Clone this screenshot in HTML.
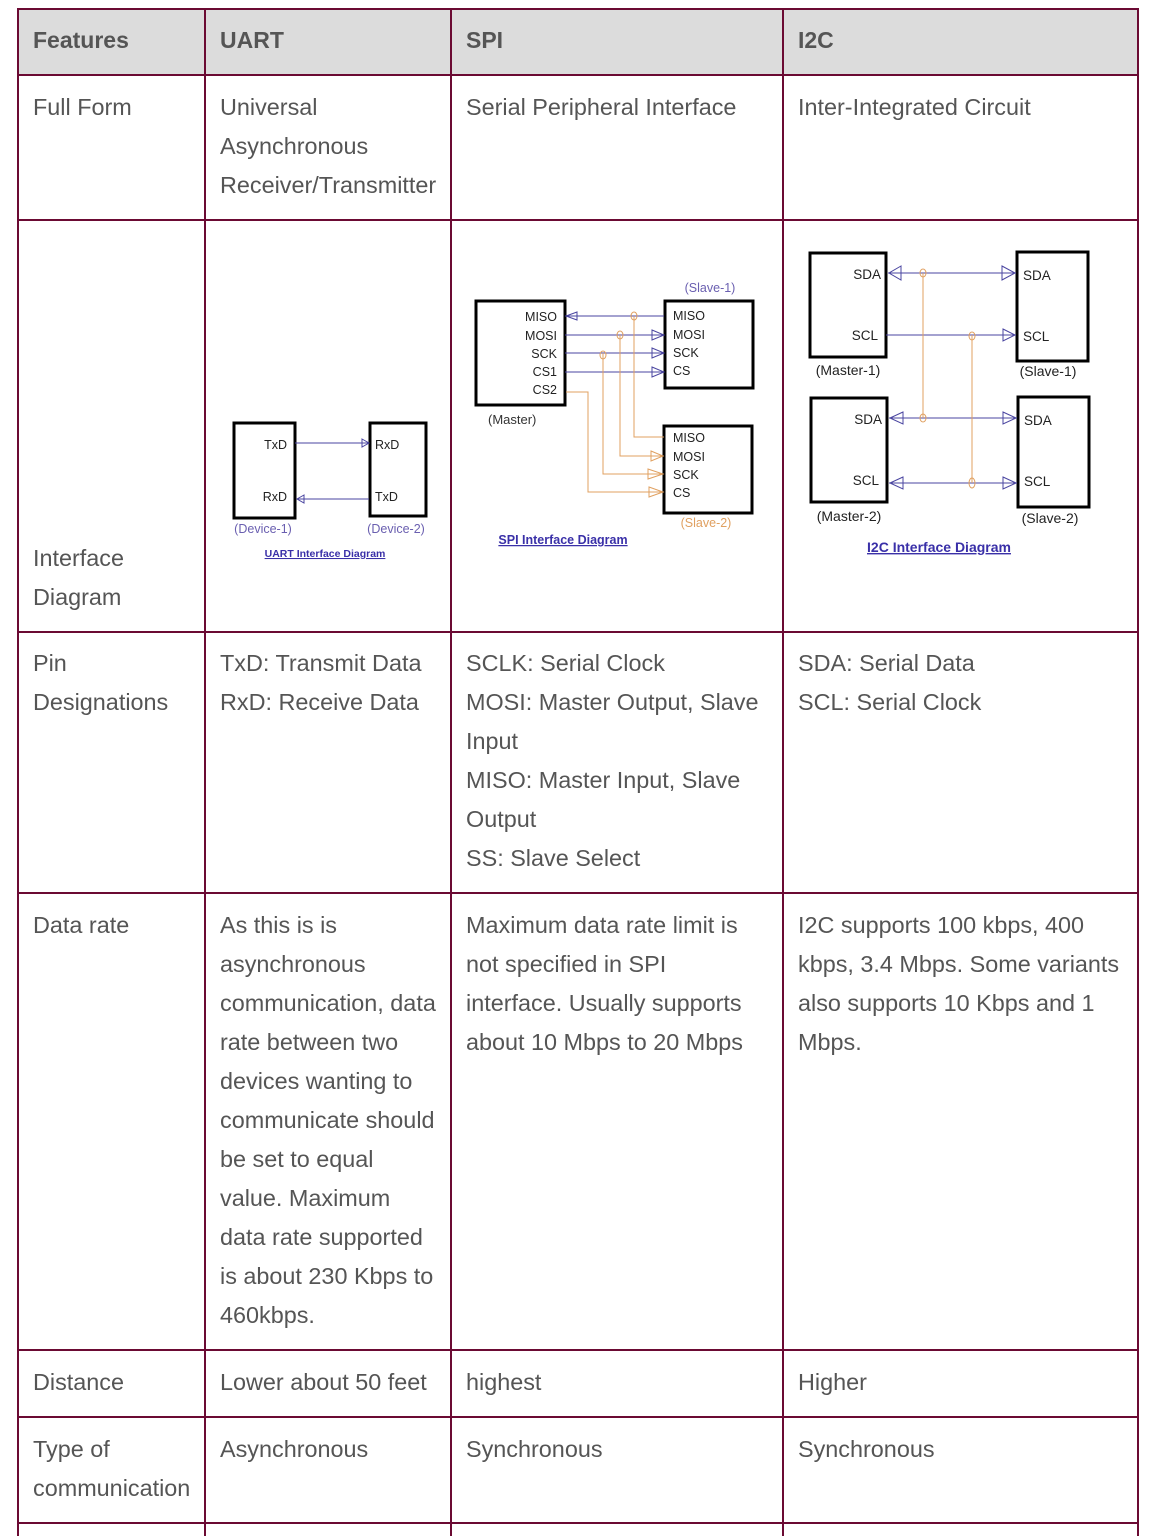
<!DOCTYPE html>
<html><head><meta charset="utf-8"><style>
body{margin:0;width:1154px;height:1536px;background:#fff;position:relative;overflow:hidden;font-family:"Liberation Sans",sans-serif;color:#555;}
.h{position:absolute;background:#6b0a33;}
.t{position:absolute;font-size:23.4px;line-height:39px;white-space:nowrap;}
.b{font-weight:bold;font-size:23px;}
svg{position:absolute;left:0;top:0;}
svg text{font-family:"Liberation Sans",sans-serif;}
</style></head><body>
<div style="position:absolute;left:18px;top:9px;width:1120px;height:66px;background:#dcdcdc"></div>
<div class="h" style="left:17px;top:8px;width:1122px;height:2px"></div>
<div class="h" style="left:17px;top:74px;width:1122px;height:2px"></div>
<div class="h" style="left:17px;top:219px;width:1122px;height:2px"></div>
<div class="h" style="left:17px;top:631px;width:1122px;height:2px"></div>
<div class="h" style="left:17px;top:892px;width:1122px;height:2px"></div>
<div class="h" style="left:17px;top:1349px;width:1122px;height:2px"></div>
<div class="h" style="left:17px;top:1416px;width:1122px;height:2px"></div>
<div class="h" style="left:17px;top:1522px;width:1122px;height:2px"></div>
<div class="h" style="left:17px;top:8px;width:2px;height:1528px"></div>
<div class="h" style="left:204px;top:8px;width:2px;height:1528px"></div>
<div class="h" style="left:450px;top:8px;width:2px;height:1528px"></div>
<div class="h" style="left:782px;top:8px;width:2px;height:1528px"></div>
<div class="h" style="left:1137px;top:8px;width:2px;height:1528px"></div>

<div class="t b" style="left:33px;top:21px">Features</div>
<div class="t b" style="left:220px;top:21px">UART</div>
<div class="t b" style="left:466px;top:21px">SPI</div>
<div class="t b" style="left:798px;top:21px">I2C</div>

<div class="t" style="left:33px;top:88px">Full Form</div>
<div class="t" style="left:220px;top:88px">Universal<br>Asynchronous<br>Receiver/Transmitter</div>
<div class="t" style="left:466px;top:88px">Serial Peripheral Interface</div>
<div class="t" style="left:798px;top:88px">Inter-Integrated Circuit</div>

<div class="t" style="left:33px;top:539px">Interface<br>Diagram</div>

<div class="t" style="left:33px;top:644px">Pin<br>Designations</div>
<div class="t" style="left:220px;top:644px">TxD: Transmit Data<br>RxD: Receive Data</div>
<div class="t" style="left:466px;top:644px">SCLK: Serial Clock<br>MOSI: Master Output, Slave<br>Input<br>MISO: Master Input, Slave<br>Output<br>SS: Slave Select</div>
<div class="t" style="left:798px;top:644px">SDA: Serial Data<br>SCL: Serial Clock</div>

<div class="t" style="left:33px;top:906px">Data rate</div>
<div class="t" style="left:220px;top:906px">As this is is<br>asynchronous<br>communication, data<br>rate between two<br>devices wanting to<br>communicate should<br>be set to equal<br>value. Maximum<br>data rate supported<br>is about 230 Kbps to<br>460kbps.</div>
<div class="t" style="left:466px;top:906px">Maximum data rate limit is<br>not specified in SPI<br>interface. Usually supports<br>about 10 Mbps to 20 Mbps</div>
<div class="t" style="left:798px;top:906px">I2C supports 100 kbps, 400<br>kbps, 3.4 Mbps. Some variants<br>also supports 10 Kbps and 1<br>Mbps.</div>

<div class="t" style="left:33px;top:1363px">Distance</div>
<div class="t" style="left:220px;top:1363px">Lower about 50 feet</div>
<div class="t" style="left:466px;top:1363px">highest</div>
<div class="t" style="left:798px;top:1363px">Higher</div>

<div class="t" style="left:33px;top:1430px">Type of<br>communication</div>
<div class="t" style="left:220px;top:1430px">Asynchronous</div>
<div class="t" style="left:466px;top:1430px">Synchronous</div>
<div class="t" style="left:798px;top:1430px">Synchronous</div>

<svg width="1154" height="1536" viewBox="0 0 1154 1536">
<g fill="none" stroke="#000" stroke-width="3">
<rect x="234" y="423" width="61" height="95"/><rect x="370" y="423" width="56" height="93"/>
<rect x="476" y="301" width="89" height="104"/><rect x="665" y="301" width="88" height="87"/><rect x="664" y="426" width="88" height="87"/>
<rect x="810" y="253" width="76" height="104"/><rect x="1017" y="252" width="71" height="109"/>
<rect x="811" y="398" width="76" height="104"/><rect x="1018" y="397" width="71" height="110"/>
</g>
<g fill="none" stroke="#4a45a0" stroke-width="1">
<line x1="295" y1="443" x2="369" y2="443"/><path d="M362 439 L369 443 L362 447Z"/>
<line x1="297" y1="499" x2="369" y2="499"/><path d="M304 495 L297 499 L304 503Z"/>
<line x1="565" y1="316" x2="664" y2="316"/><path d="M577 312 L566 316 L577 320Z"/>
<line x1="565" y1="335" x2="664" y2="335"/><path d="M652 330 L664 335 L652 340Z"/>
<line x1="565" y1="353" x2="664" y2="353"/><path d="M652 348 L664 353 L652 358Z"/>
<line x1="565" y1="372" x2="664" y2="372"/><path d="M652 367 L664 372 L652 377Z"/>
<line x1="888" y1="273" x2="1016" y2="273"/><path d="M901 266 L889 273 L901 280Z"/><path d="M1002 266 L1015 273 L1002 280Z"/>
<line x1="886" y1="335" x2="1016" y2="335"/><path d="M1003 329 L1015 335 L1003 341Z"/>
<line x1="889" y1="418" x2="1017" y2="418"/><path d="M903 412 L890 418 L903 424Z"/><path d="M1003 412 L1016 418 L1003 424Z"/>
<line x1="889" y1="483" x2="1017" y2="483"/><path d="M903 477 L890 483 L903 489Z"/><path d="M1003 477 L1016 483 L1003 489Z"/>
</g>
<g fill="none" stroke="#e0a060" stroke-width="1">
<path d="M634 316 V437 H664"/><ellipse cx="634" cy="316" rx="3" ry="4"/>
<path d="M620 335 V456 H664"/><ellipse cx="620" cy="335" rx="3" ry="4"/><path d="M651 451 L663 456 L651 461Z"/>
<path d="M603 353 V474 H664"/><ellipse cx="603" cy="355" rx="3" ry="4"/><path d="M648 469 L663 474 L648 479Z"/>
<path d="M566 392 H588 V492 H664"/><path d="M649 487 L663 492 L649 497Z"/>
<line x1="923" y1="273" x2="923" y2="418"/><ellipse cx="923" cy="273" rx="3" ry="4"/><ellipse cx="923" cy="418" rx="3" ry="4"/>
<line x1="972" y1="335" x2="972" y2="483"/><ellipse cx="972" cy="336" rx="3" ry="4"/><ellipse cx="972" cy="483" rx="3" ry="5"/>
</g>
<g font-size="12.5" fill="#222">
<text x="287" y="449" text-anchor="end">TxD</text><text x="287" y="501" text-anchor="end">RxD</text>
<text x="375" y="449">RxD</text><text x="375" y="501">TxD</text>
<text x="557" y="321" text-anchor="end">MISO</text><text x="557" y="340" text-anchor="end">MOSI</text><text x="557" y="358" text-anchor="end">SCK</text><text x="557" y="376" text-anchor="end">CS1</text><text x="557" y="394" text-anchor="end">CS2</text>
<text x="673" y="320">MISO</text><text x="673" y="339">MOSI</text><text x="673" y="357">SCK</text><text x="673" y="375">CS</text>
<text x="673" y="442">MISO</text><text x="673" y="461">MOSI</text><text x="673" y="479">SCK</text><text x="673" y="497">CS</text>
<text x="488" y="424" fill="#333" font-size="13">(Master)</text>
<text x="881" y="279" text-anchor="end" font-size="13.5">SDA</text><text x="878" y="340" text-anchor="end" font-size="13.5">SCL</text>
<text x="1023" y="280" font-size="13.5">SDA</text><text x="1023" y="341" font-size="13.5">SCL</text>
<text x="882" y="424" text-anchor="end" font-size="13.5">SDA</text><text x="879" y="485" text-anchor="end" font-size="13.5">SCL</text>
<text x="1024" y="425" font-size="13.5">SDA</text><text x="1024" y="486" font-size="13.5">SCL</text>
<text x="848" y="375" text-anchor="middle" font-size="14">(Master-1)</text><text x="1048" y="376" text-anchor="middle" font-size="14">(Slave-1)</text>
<text x="849" y="521" text-anchor="middle" font-size="14">(Master-2)</text><text x="1050" y="523" text-anchor="middle" font-size="14">(Slave-2)</text>
</g>
<g font-size="12.5" fill="#6a5fb0" text-anchor="middle">
<text x="263" y="533">(Device-1)</text><text x="396" y="533">(Device-2)</text>
<text x="710" y="292">(Slave-1)</text>
</g>
<text x="706" y="527" font-size="12.5" fill="#e0a060" text-anchor="middle">(Slave-2)</text>
<g font-weight="bold" fill="#3a30a8" text-anchor="middle" text-decoration="underline">
<text x="325" y="557" font-size="10.5">UART Interface Diagram</text>
<text x="563" y="544" font-size="12.5">SPI Interface Diagram</text>
<text x="939" y="552" font-size="14">I2C Interface Diagram</text>
</g>
</svg>
</body></html>
